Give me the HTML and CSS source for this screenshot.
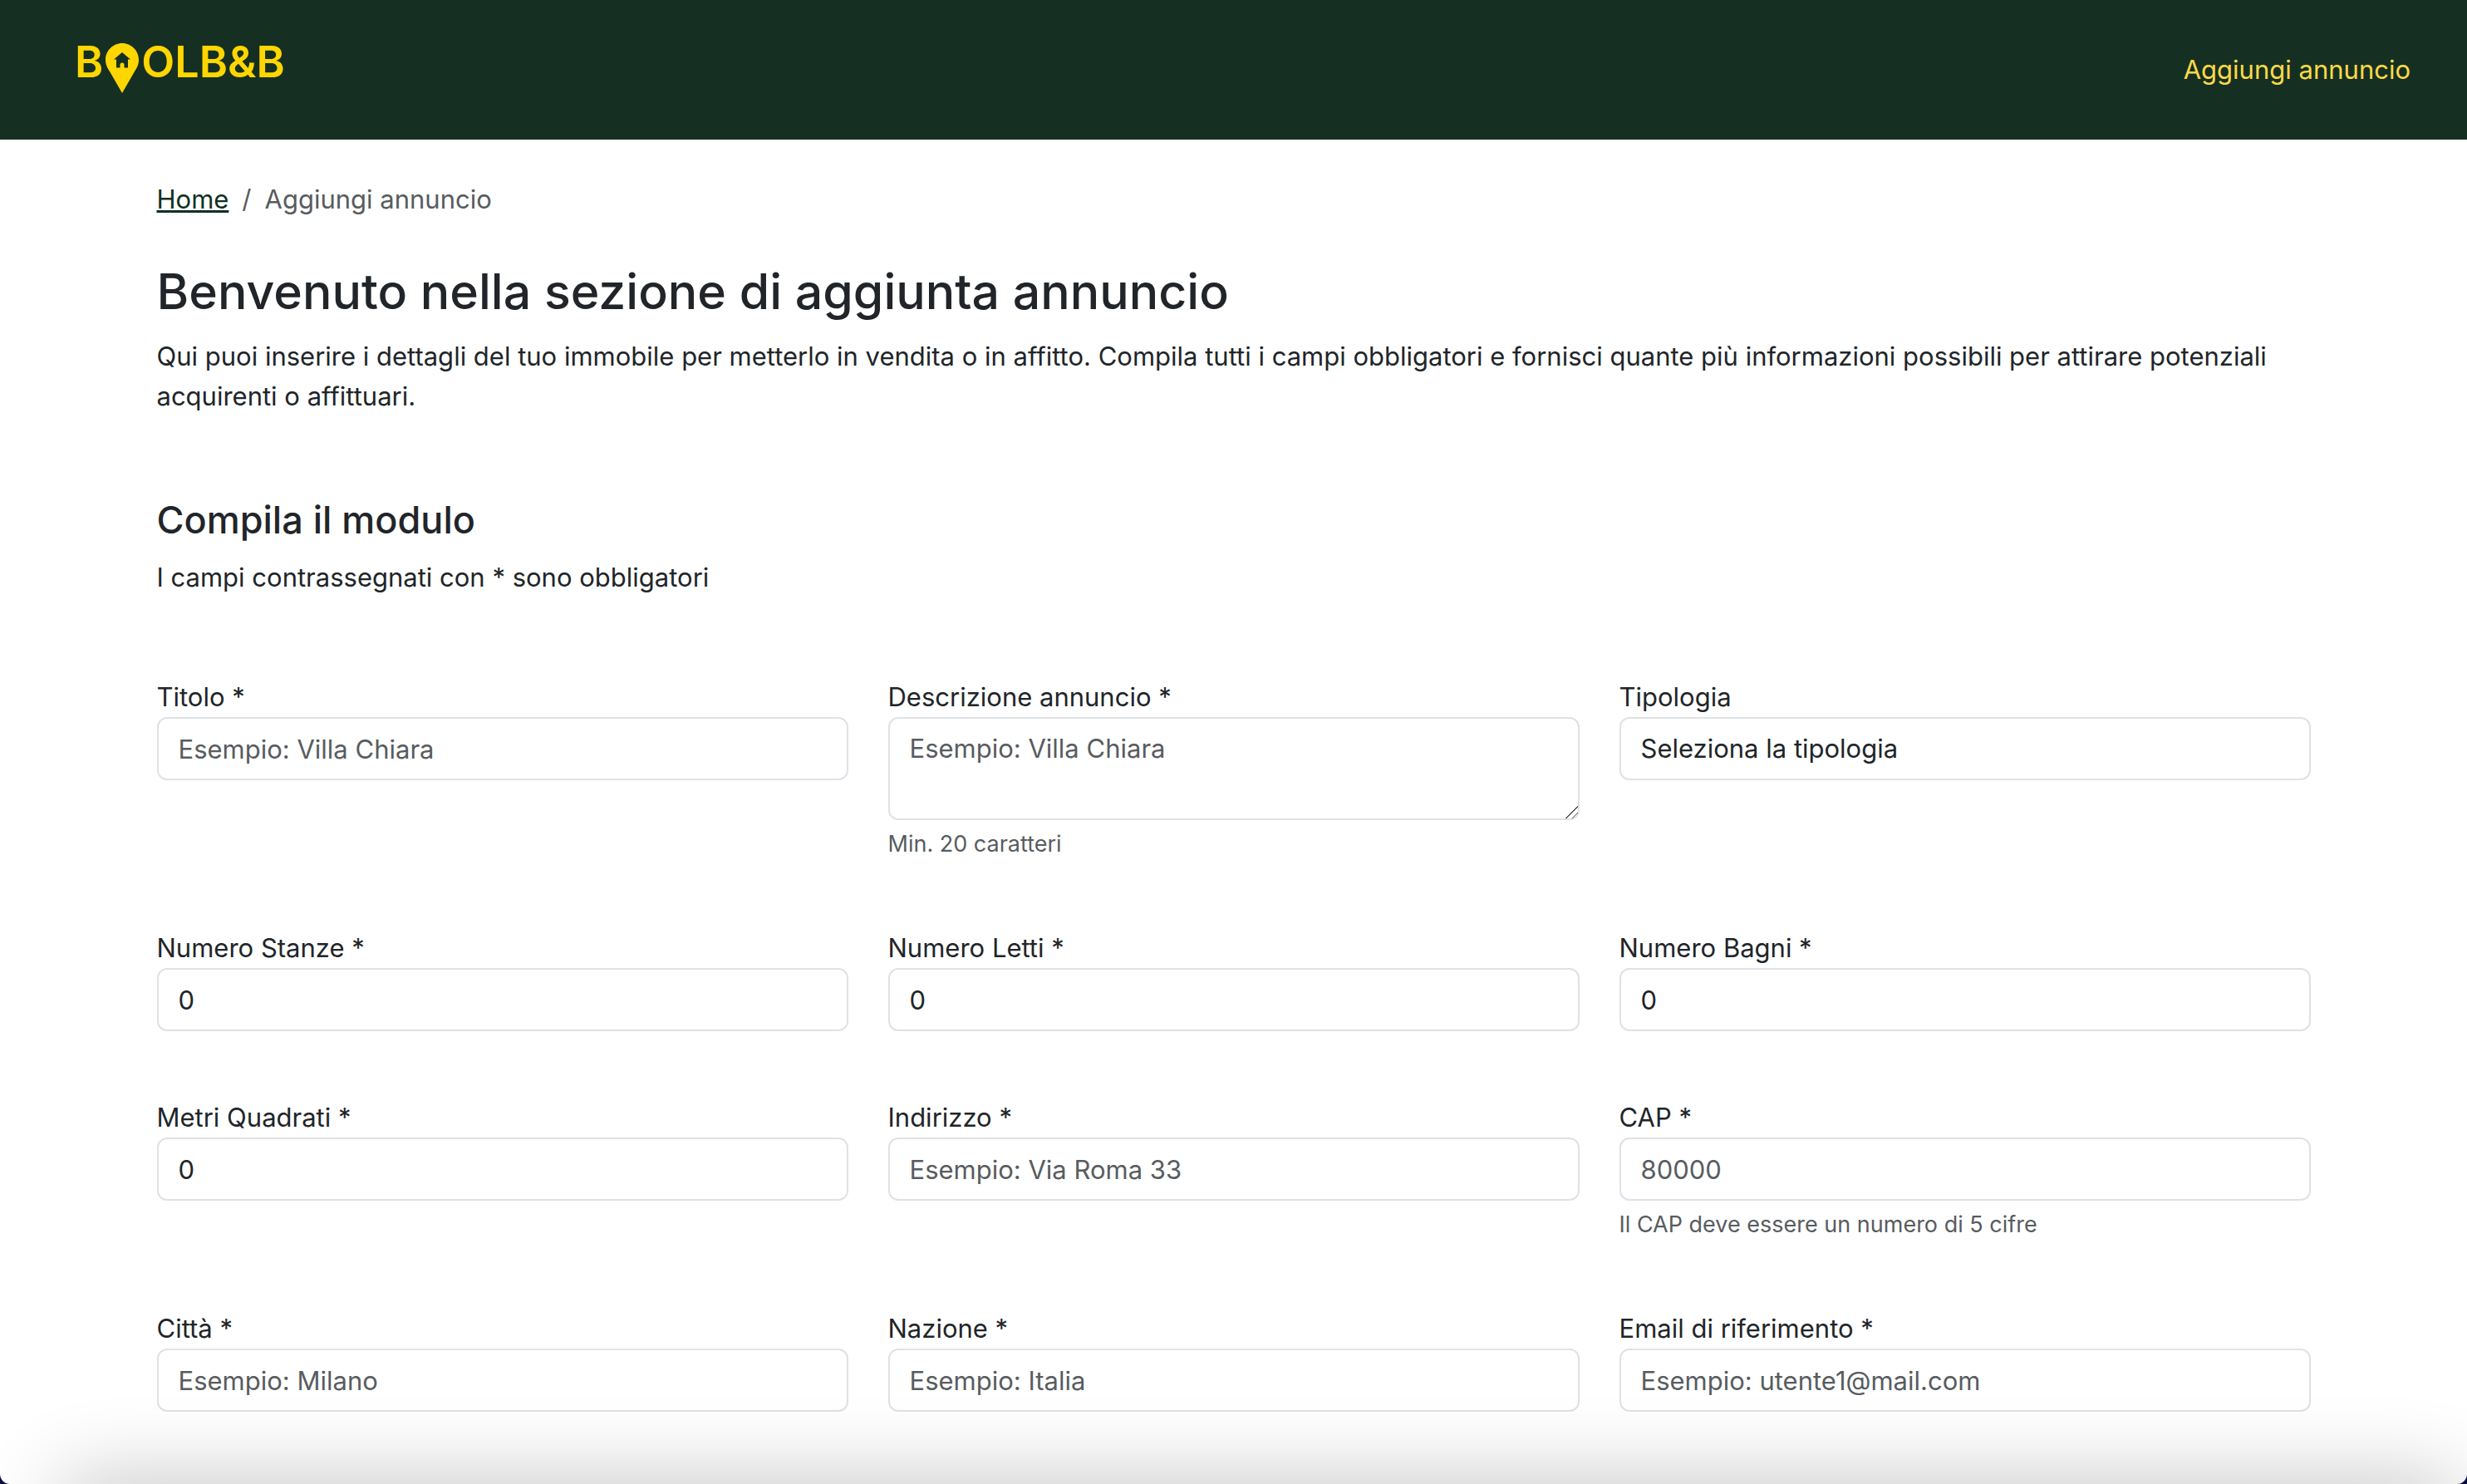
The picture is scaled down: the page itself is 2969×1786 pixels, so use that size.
FILE: index.html
```html
<!DOCTYPE html>
<html lang="it">
<head>
<meta charset="utf-8">
<meta name="viewport" content="width=device-width, initial-scale=1">
<title>BoolB&amp;B - Aggiungi annuncio</title>
<link rel="stylesheet" href="styles.css">
</head>
<body>
<div class="page">
  <header class="header">
    <a class="logo" href="#">
      <span>B</span>
      <svg class="logo-pin" viewBox="0 0 40 60" aria-hidden="true">
        <path fill="currentColor" d="M20 0C31 0 40 9 40 20C40 26 37.500 30 35 34L20 60L5 34C2.500 30 0 26 0 20C0 9 9 0 20 0Z"/>
        <path class="logo-house" d="M20 11L30 19.500H27V29.500H22.500V26A2.500 2.500 0 0 0 17.500 26V29.500H13V19.500H10Z"/>
      </svg>
      <span>OLB&amp;B</span>
    </a>
    <nav><a class="nav-link" href="#">Aggiungi annuncio</a></nav>
  </header>

  <main class="container">
    <nav aria-label="breadcrumb">
      <ol class="breadcrumb">
        <li><a href="#">Home</a></li>
        <li aria-current="page">Aggiungi annuncio</li>
      </ol>
    </nav>

    <section class="intro">
      <h1>Benvenuto nella sezione di aggiunta annuncio</h1>
      <p>Qui puoi inserire i dettagli del tuo immobile per metterlo in vendita o in affitto. Compila tutti i campi obbligatori e fornisci quante più informazioni possibili per attirare potenziali acquirenti o affittuari.</p>
    </section>

    <section class="intro">
      <h2>Compila il modulo</h2>
      <p>I campi contrassegnati con * sono obbligatori</p>
    </section>

    <form class="form-grid">
      <div class="field">
        <label for="title">Titolo *</label>
        <input class="control" id="title" type="text" placeholder="Esempio: Villa Chiara">
      </div>
      <div class="field">
        <label for="description">Descrizione annuncio *</label>
        <textarea class="control" id="description" placeholder="Esempio: Villa Chiara"></textarea>
        <p class="hint">Min. 20 caratteri</p>
      </div>
      <div class="field">
        <label for="type">Tipologia</label>
        <select class="control" id="type"><option>Seleziona la tipologia</option></select>
      </div>
      <div class="field">
        <label for="rooms">Numero Stanze *</label>
        <input class="control" id="rooms" type="number" value="0">
      </div>
      <div class="field">
        <label for="beds">Numero Letti *</label>
        <input class="control" id="beds" type="number" value="0">
      </div>
      <div class="field">
        <label for="baths">Numero Bagni *</label>
        <input class="control" id="baths" type="number" value="0">
      </div>
      <div class="field">
        <label for="area">Metri Quadrati *</label>
        <input class="control" id="area" type="number" value="0">
      </div>
      <div class="field">
        <label for="address">Indirizzo *</label>
        <input class="control" id="address" type="text" placeholder="Esempio: Via Roma 33">
      </div>
      <div class="field">
        <label for="zip">CAP *</label>
        <input class="control" id="zip" type="text" placeholder="80000">
        <p class="hint">Il CAP deve essere un numero di 5 cifre</p>
      </div>
      <div class="field">
        <label for="city">Città *</label>
        <input class="control" id="city" type="text" placeholder="Esempio: Milano">
      </div>
      <div class="field">
        <label for="country">Nazione *</label>
        <input class="control" id="country" type="text" placeholder="Esempio: Italia">
      </div>
      <div class="field">
        <label for="email">Email di riferimento *</label>
        <input class="control" id="email" type="email" placeholder="Esempio: utente1@mail.com">
      </div>
    </form>
  </main>
</div>
</body>
</html>
```
FILE: styles.css
```css
:root {
  --green: #153023;
  --yellow: #ffd600;
  --text: #212529;
  --muted: #585c5f;
  --border: #dee2e6;
}

* {
  box-sizing: border-box;
}

body {
  margin: 0;
  background: #0b0b45;
  color: var(--text);
  font: 400 31px/48px Inter, sans-serif;
}

h1,
h2,
p,
ol {
  margin: 0;
  padding: 0;
}

.page {
  position: relative;
  min-height: 100vh;
  padding-bottom: 80px;
  overflow: hidden;
  background: #fff;
  border-radius: 0 0 12px 12px;
}

/* Soft shade rising from the lower edge */
.page::after {
  content: "";
  position: absolute;
  top: 100%;
  left: 76px;
  right: 12px;
  height: 80px;
  border-radius: 20px;
  box-shadow: 0 0 100px 4px rgba(0, 0, 0, 0.24);
  pointer-events: none;
}

.header {
  display: flex;
  align-items: center;
  justify-content: space-between;
  height: 168px;
  padding: 0 68px 0 90px;
  background: var(--green);
}

.logo {
  display: flex;
  align-items: flex-start;
  gap: 3px;
  height: 64px;
  color: var(--yellow);
  font-size: 52px;
  font-weight: 600;
  line-height: 46px;
  text-decoration: none;
}

.logo-pin {
  width: 40px;
  height: 60px;
}

.logo-house {
  fill: var(--green);
}

.nav-link {
  color: #fdd949;
  text-decoration: none;
}

.container {
  max-width: 2640px;
  margin: 0 auto;
  padding: 48px 24px 0;
}

.breadcrumb {
  display: flex;
  margin-bottom: 48px;
  color: var(--muted);
  list-style: none;
}

.breadcrumb a {
  color: #0f3122;
}

.breadcrumb li + li::before {
  content: "/";
  padding: 0 16px;
}

.intro {
  margin-bottom: 96px;
}

h1,
h2 {
  margin-bottom: 16px;
  font-weight: 500;
}

h1 {
  font-size: 59px;
  line-height: 77px;
}

h2 {
  font-size: 45px;
  line-height: 58px;
}

.form-grid {
  display: grid;
  grid-template-columns: repeat(3, minmax(0, 1fr));
  gap: 80px 48px;
}

.field {
  display: flex;
  flex-direction: column;
}

.control {
  width: 100%;
  height: 76px;
  padding: 12px 24px;
  border: 2px solid var(--border);
  border-radius: 12px;
  outline: 0;
  background: #fff;
  color: var(--text);
  font: inherit;
  appearance: none;
}

.control::placeholder {
  color: var(--muted);
  opacity: 1;
}

.control::-webkit-inner-spin-button {
  appearance: none;
}

textarea.control {
  height: 124px;
  resize: vertical;
}

textarea.control::-webkit-resizer {
  background: linear-gradient(135deg, transparent 48%, #555 48%, #555 54%, transparent 54%, transparent 74%, #555 74%, #555 80%, transparent 80%);
}

.hint {
  margin-top: 8px;
  color: var(--muted);
  font-size: 27px;
  line-height: 42px;
}

@media (max-width: 1200px) {
  .form-grid {
    grid-template-columns: minmax(0, 1fr);
  }
}
```
